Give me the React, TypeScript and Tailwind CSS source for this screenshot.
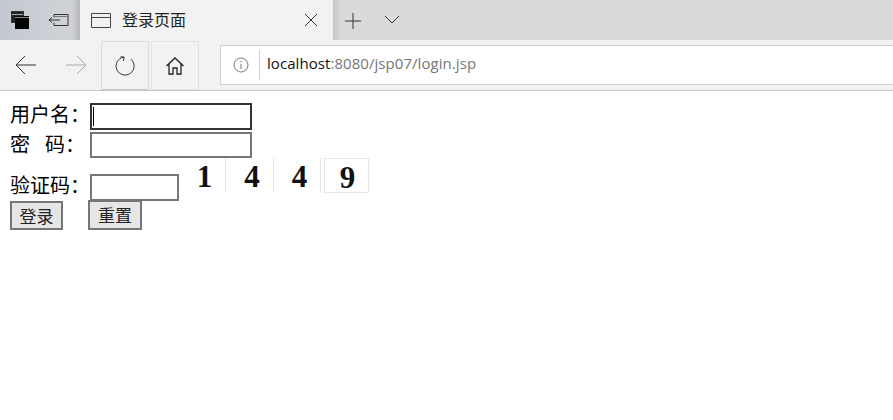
import React from 'react';

const cjk = { fontFamily: '"Noto Sans CJK SC", sans-serif' };

const App: React.FC = () => {
  return (
    <div className="w-[893px] h-[420px] overflow-hidden bg-white flex flex-col font-['Noto_Sans_CJK_SC',sans-serif]">
      {/* Tab strip */}
      <div className="h-10 flex bg-[#d9dada]">
        <div className="w-20 flex items-center bg-gradient-to-r from-[#c3c9d2] via-[#d0d2d6] via-90% to-[#b4b6b8]">
          <svg width="20" height="20" viewBox="0 0 20 20" className="ml-[10px]">
            <rect x="1.500" y="1.500" width="12" height="11" fill="#222" stroke="#333" />
            <rect x="2" y="4" width="11" height="1" fill="#aaa" />
            <rect x="5" y="6" width="14" height="13" fill="#050505" />
            <rect x="5" y="7" width="14" height="1" fill="#888" />
          </svg>
          <svg width="22" height="14" viewBox="0 0 22 14" className="ml-[18px]" fill="none" stroke="#333" strokeWidth="1">
            <path d="M6 1.500h14v11H6M6 1.500v3M6 9.500v3M1 7h11M4 4.500L1 7l3 2.500" />
            <path d="M6 3.500h14" stroke="#777" />
          </svg>
        </div>
        <div className="w-[253px] flex items-center bg-[#f2f2f2]">
          <svg width="20" height="18" viewBox="0 0 20 18" className="ml-[11px]" fill="none" stroke="#444" strokeWidth="1">
            <path d="M.5 2.500h19v14H.5zM.5 6.500h19" />
          </svg>
          <span className="ml-[11px] -mt-[2px] text-[16px] text-[#222]" style={cjk}>登录页面</span>
          <svg width="14" height="14" viewBox="0 0 14 14" className="ml-auto mr-[15px]" stroke="#333" strokeWidth="1">
            <path d="M1 1l12 12M13 1L1 13" />
          </svg>
        </div>
        <div className="flex-1 flex items-center bg-gradient-to-r from-[#c4c5c5] to-[#d9dada] to-[8px]">
          <svg width="18" height="18" viewBox="0 0 18 18" className="ml-[11px] mt-[2px]" stroke="#333" strokeWidth="1">
            <path d="M9 1v16M1 9h16" />
          </svg>
          <svg width="16" height="10" viewBox="0 0 16 10" className="ml-[22px]" fill="none" stroke="#333" strokeWidth="1">
            <path d="M1 1l7 7 7-7" />
          </svg>
        </div>
      </div>

      {/* Toolbar */}
      <div className="h-[51px] flex items-start bg-[#f2f2f2] border-b border-[#c8c8c8]">
        <div className="w-[51px] h-[50px] flex items-center justify-center">
          <svg width="20" height="18" viewBox="0 0 20 18" fill="none" stroke="#333" strokeWidth="1">
            <path d="M0 9h20M9 0L0 9l9 9" />
          </svg>
        </div>
        <div className="w-[50px] h-[50px] flex items-center justify-center">
          <svg width="20" height="18" viewBox="0 0 20 18" fill="none" stroke="#aaa" strokeWidth="1">
            <path d="M0 9h20M11 0l9 9-9 9" />
          </svg>
        </div>
        <div className="w-12 h-[49px] mt-px flex items-center justify-center border border-[#dcdcdc] border-b-[#c8c8c8]">
          <svg width="20" height="20" viewBox="0 0 20 20" fill="none" stroke="#333" strokeWidth="1" className="overflow-visible">
            <path d="M15.800 3.100A9 9 0 1 1 8.500 1.200M5.500 .8L9 1l-.5 4" />
          </svg>
        </div>
        <div className="w-12 h-[49px] mt-px ml-[2px] flex items-center justify-center border border-[#e2e2e2]">
          <svg width="20" height="20" viewBox="0 0 20 20" fill="none" stroke="#222" strokeWidth="1.300">
            <path d="M1.500 10L10 2l8.500 8M4 8v10h4v-6h4v6h4V8" />
          </svg>
        </div>
        <div className="ml-[21px] mt-[5px] flex-1 h-10 flex items-center bg-white border-y border-l border-[#cfcfcf]">
          <svg width="16" height="16" viewBox="0 0 16 16" className="ml-[12px]" fill="none" stroke="#777" strokeWidth="1">
            <circle cx="8" cy="8" r="7" />
            <path d="M8 7v5M8 4v1.500" />
          </svg>
          <div className="ml-[10px] w-px h-[30px] bg-[#cfcfcf]" />
          <span className="ml-[7px] -mt-[3px] text-[15px] text-[#767676] font-['Open_Sans',sans-serif] tracking-[0.06px]">
            <span className="text-[#111]">localhost</span>:8080/jsp07/login.jsp
          </span>
        </div>
      </div>

      {/* Login form */}
      <form className="pl-[10px] pt-[11px] text-[20px] leading-[26px] text-black" style={cjk}>
        <div className="flex items-start h-[30px] pt-px">
          <label className="w-20 -mt-[2px]">用户名：</label>
          <div className="w-[162px] h-[27px] border-2 border-[#333] bg-white flex items-center pl-[1px]">
            <div className="w-px h-[19px] bg-black" />
          </div>
        </div>
        <div className="flex items-start h-[26px]">
          <label className="w-20 -mt-[1px]"><span className="mr-[15px]">密</span>码：</label>
          <input type="text" className="w-[162px] h-[26px] border-2 border-[#767676] bg-white" />
        </div>
        <div className="flex items-start h-[43px]">
          <label className="w-20 mt-[14px]">验证码：</label>
          <input type="text" className="w-[89px] h-[27px] mt-[16px] border-2 border-[#767676] bg-white" />
          <div className="ml-[5px] w-[185px] h-[35px] flex font-['Liberation_Serif',serif] font-bold text-[31px] leading-[37px] text-[#111]">
            <span className="w-[42px] text-center border-r border-[#e6e6e6]">1</span>
            <span className="w-[48px] pl-[5px] text-center border-r border-[#e6e6e6]">4</span>
            <span className="w-[47px] pl-[5px] text-center border-r border-[#e6e6e6]">4</span>
            <span className="ml-[3px] w-[45px] pl-[2px] text-center border border-[#e6e6e6]">9</span>
          </div>
        </div>
        <div className="flex items-start">
          <button type="button" className="w-[53px] h-[29px] border-2 border-[#767676] bg-[#e6e6e6] text-[17px] leading-[24px] text-[#222]">登录</button>
          <button type="button" className="ml-[25px] w-[54px] h-[30px] -mt-px border-2 border-[#767676] bg-[#e6e6e6] text-[17px] leading-[24px] text-[#222]">重置</button>
        </div>
      </form>
    </div>
  );
};

export default App;
